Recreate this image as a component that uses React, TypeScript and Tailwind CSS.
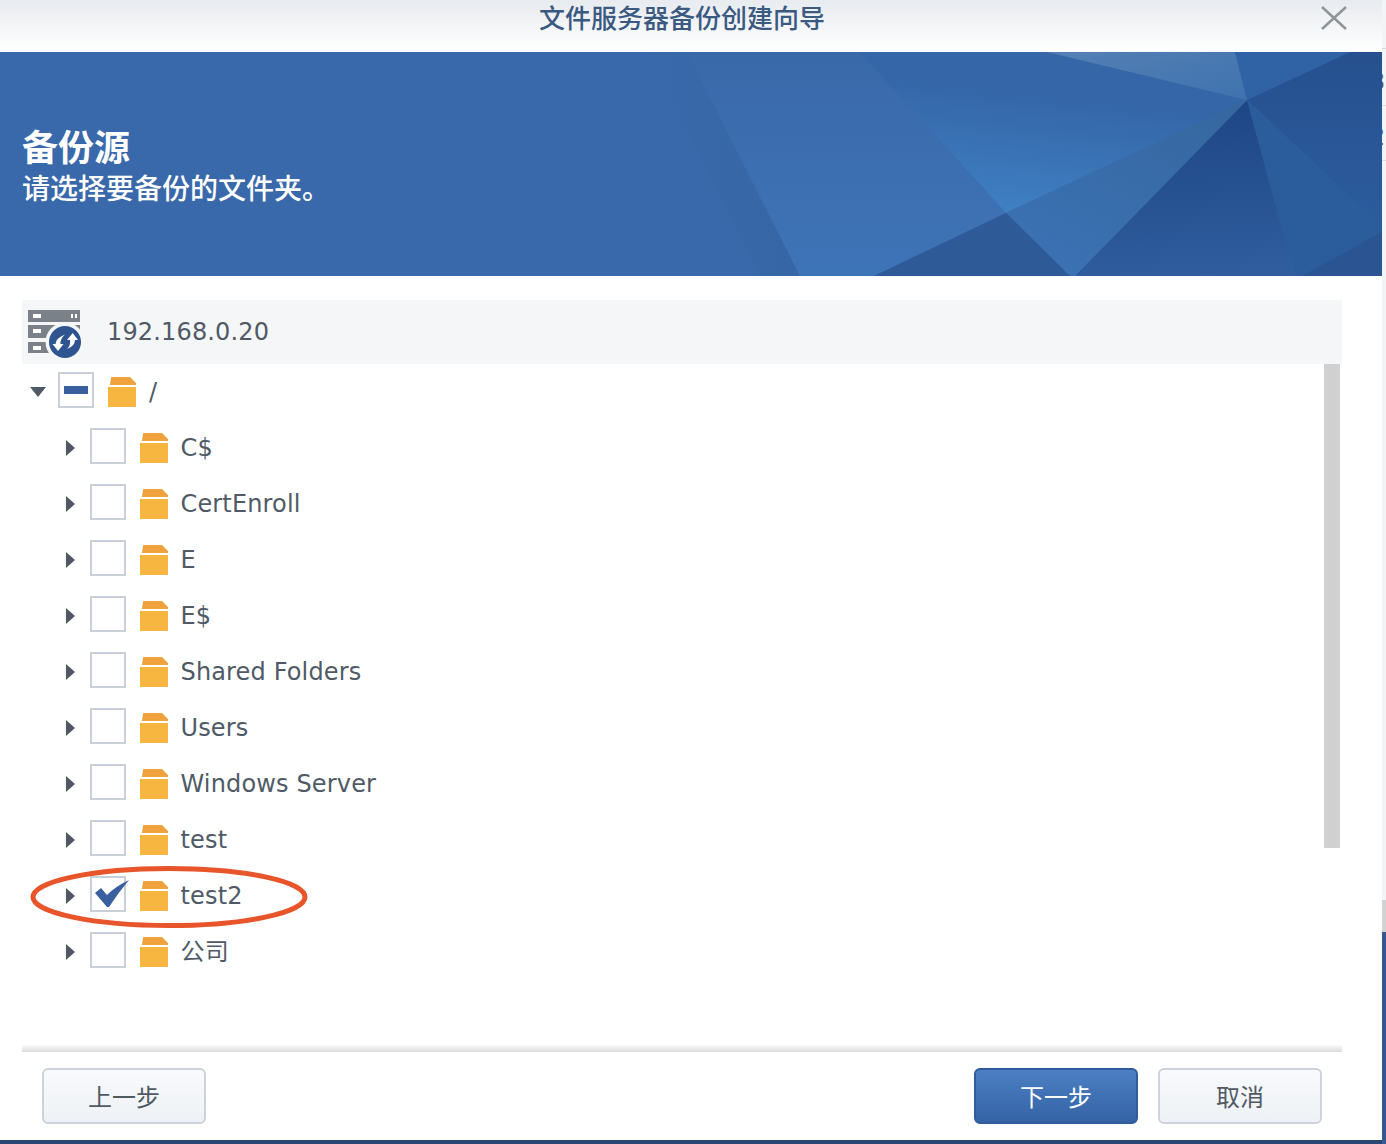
const CJK = '"Noto Sans CJK SC", sans-serif';

const rows = ["C$", "CertEnroll", "E", "E$", "Shared Folders", "Users", "Windows Server", "test", "test2", "公司"];

function Folder() {
  return (
    <svg width="28" height="30" viewBox="0 0 28 30" className="shrink-0">
      <path d="M3 1Q3 0 4 0H22L28 6V8H2Z" fill="#f0a23c" />
      <path d="M0 10H28V30H0Z" fill="#f6b63f" />
    </svg>
  );
}

function Arrow({ down }: { down?: boolean }) {
  if (down) {
    return (
      <svg width="16" height="10" viewBox="0 0 16 10" className="shrink-0">
        <path d="M0 0H16L8 10Z" fill="#4f5a66" />
      </svg>
    );
  }
  return (
    <svg width="9" height="16" viewBox="0 0 9 16" className="shrink-0">
      <path d="M0 0L9 8L0 16Z" fill="#4f5a66" />
    </svg>
  );
}

function ServerIcon() {
  return (
    <svg width="60" height="60" viewBox="0 0 60 60" className="shrink-0">
      <rect x="2" y="8" width="52" height="12" fill="#7b8188" />
      <rect x="7" y="12" width="8" height="4" fill="#fff" />
      <rect x="45" y="12" width="2" height="4" fill="#fff" />
      <rect x="49" y="12" width="2" height="4" fill="#fff" />
      <rect x="2" y="23" width="52" height="13" fill="#7b8188" />
      <rect x="7" y="27" width="8" height="4" fill="#fff" />
      <rect x="2" y="40" width="52" height="11" fill="#7b8188" />
      <rect x="7" y="44" width="8" height="4" fill="#fff" />
      <circle cx="39" cy="40" r="19.5" fill="#f5f6f8" />
      <circle cx="39" cy="40" r="16" fill="#2f5590" />
      <g transform="translate(0 5)">
        <path d="M46.7 26L52 33H49Q49 39 41 42Q45 38 44 33H41Z" fill="#fff" />
        <path d="M32 44L26.5 37H29.5Q30 31 39 27.5Q34 32 34.5 37H37.5Z" fill="#fff" />
      </g>
    </svg>
  );
}

function Banner() {
  return (
    <svg className="absolute inset-0" width="1382" height="224" viewBox="0 0 1382 224">
      <defs>
        <linearGradient id="mid" gradientUnits="userSpaceOnUse" x1="1020" y1="40" x2="1006" y2="161">
          <stop offset="0" stopColor="#3466a8" />
          <stop offset="1" stopColor="#3f80c3" />
        </linearGradient>
        <linearGradient id="left" x1="0" y1="0" x2="0" y2="1">
          <stop offset="0" stopColor="#3a69a9" />
          <stop offset="1" stopColor="#3e74b8" />
        </linearGradient>
        <linearGradient id="dark" x1="0.4" y1="0" x2="0.5" y2="1">
          <stop offset="0" stopColor="#1d4585" />
          <stop offset="1" stopColor="#2f5d9d" />
        </linearGradient>
        <linearGradient id="light" x1="0" y1="0" x2="1" y2="1">
          <stop offset="0" stopColor="#5480b4" />
          <stop offset="1" stopColor="#3f72ae" />
        </linearGradient>
        <linearGradient id="wedge" x1="0.9" y1="0" x2="0.2" y2="1">
          <stop offset="0" stopColor="#36679f" />
          <stop offset="1" stopColor="#3b72b4" />
        </linearGradient>
        <linearGradient id="fade" x1="0" y1="0" x2="1" y2="0">
          <stop offset="0" stopColor="#3a69ab" />
          <stop offset="1" stopColor="#3766a6" />
        </linearGradient>
        <linearGradient id="corner" x1="0" y1="0" x2="0" y2="1">
          <stop offset="0" stopColor="#26508e" />
          <stop offset="1" stopColor="#2c5c9e" />
        </linearGradient>
      </defs>
      <rect width="1382" height="224" fill="#3a69ab" />
      <path d="M645 0H687L800 224H760Z" fill="url(#fade)" />
      <path d="M687 0H860L1006 161L874 224H800Z" fill="url(#left)" />
      <path d="M860 0H1047L1247 48L1006 161Z" fill="url(#mid)" />
      <path d="M1047 0H1235L1247 48Z" fill="url(#light)" />
      <path d="M1235 0H1350L1247 48Z" fill="#2f63a6" />
      <path d="M1350 0H1382V175L1247 48Z" fill="url(#corner)" />
      <path d="M1247 48L1382 175V224H1295Z" fill="#2b5c9c" />
      <path d="M1382 180V224H1302Z" fill="#2a5592" />
      <path d="M1247 48L1295 224H1075Z" fill="url(#dark)" />
      <path d="M1247 48L1075 224H1070L1006 161Z" fill="url(#wedge)" />
      <path d="M1006 161L1070 224H874Z" fill="#2e5a98" />
    </svg>
  );
}

function TreeRow({ name }: { name: string }) {
  return (
    <div className="flex h-14 items-center pl-[44px]">
      <Arrow />
      <div className="ml-[15px] mb-1 h-9 w-9 shrink-0 border-2 border-[#c9cfd9] bg-white" />
      <div className="ml-[14px]">
        <Folder />
      </div>
      <span className="ml-[12.5px] tracking-[0.15px] text-[#4f5a66]">{name}</span>
    </div>
  );
}

export default function App() {
  return (
    <div
      className="relative h-[1144px] w-[1386px] overflow-hidden bg-white text-[24px]"
      style={{ fontFamily: '"DejaVu Sans", "Noto Sans CJK SC", sans-serif' }}
    >
      {/* sliver of the window behind the dialog */}
      <div className="absolute right-0 top-0 h-[932px] w-1 overflow-hidden bg-[#f3f4f5] text-[#555]">
        <span className="absolute left-[-12px] top-[64px]">3</span>
        <span className="absolute left-[-12px] top-[119px]">2</span>
        <div className="absolute top-[48px] h-px w-1 bg-[#dcdcdc]" />
        <div className="absolute top-[105px] h-px w-1 bg-[#dcdcdc]" />
        <div className="absolute top-[160px] h-px w-1 bg-[#dcdcdc]" />
        <div className="absolute bottom-0 h-8 w-1 bg-[#d2d2d2]" />
      </div>
      <div className="absolute bottom-0 right-0 h-[212px] w-1 bg-[#37588f]" />

      <div className="relative flex h-[1140px] w-[1382px] flex-col bg-white">
        {/* title bar */}
        <div className="relative flex h-[52px] shrink-0 justify-center bg-gradient-to-b from-[#e8ebef] to-white pr-[18px]">
          <span className="h-[34px] text-[26px] font-medium leading-[34px] text-[#3a5a82]" style={{ fontFamily: CJK }}>
            文件服务器备份创建向导
          </span>
          <svg width="26" height="24" viewBox="0 0 26 24" className="absolute left-[1321px] top-[6px]">
            <path d="M1 1L25 23M25 1L1 23" stroke="#8f9499" strokeWidth="2.5" fill="none" />
          </svg>
        </div>

        {/* banner */}
        <div className="relative h-[224px] shrink-0 overflow-hidden">
          <Banner />
          <div className="relative flex h-full flex-col justify-center pb-[2px] pl-[22px] text-white" style={{ fontFamily: CJK }}>
            <div className="text-[36px] font-bold leading-[48px]">备份源</div>
            <div className="text-[28px] font-medium leading-[36px]">请选择要备份的文件夹。</div>
          </div>
        </div>

        {/* tree */}
        <div className="ml-[22px] mr-[40px] mt-[24px] shrink-0">
          <div className="flex h-16 items-center bg-[#f5f6f8] pl-[4px]">
            <ServerIcon />
            <span className="ml-[21px] tracking-[0.15px] text-[#4f5a66]">192.168.0.20</span>
          </div>
          <div className="relative h-[681px]">
            <div className="absolute right-[2px] top-0 h-[484px] w-4 bg-[#d0d0d0]" />
            <div className="flex h-14 items-center pl-2">
              <Arrow down />
              <div className="ml-3 mb-1 flex h-9 w-9 shrink-0 items-center justify-center border-2 border-[#c9cfd9] bg-white">
                <div className="h-2 w-6 bg-[#3a5f9e]" />
              </div>
              <div className="ml-[14px]">
                <Folder />
              </div>
              <span className="ml-[13px] text-[#4f5a66]">/</span>
            </div>
            {rows.map((name) => (
              <TreeRow key={name} name={name} />
            ))}
          </div>
        </div>

        {/* footer */}
        <div className="ml-[22px] mr-[40px] h-[7px] shrink-0 bg-gradient-to-b from-[#fafafa] to-[#dcdcde]" />
        <div className="flex h-[88px] shrink-0 items-start justify-between pl-[42px] pr-[60px] pt-[16px]" style={{ fontFamily: CJK }}>
          <button className="h-14 w-[164px] rounded-md border-2 border-[#ccd3dc] bg-gradient-to-b from-[#f8fafd] to-[#eef1f5] text-[#505a64]">
            上一步
          </button>
          <div className="flex gap-5">
            <button className="h-14 w-[164px] rounded-md border-2 border-[#2f5c9c] bg-gradient-to-b from-[#4c7fc4] to-[#3563a6] text-white">
              下一步
            </button>
            <button className="h-14 w-[164px] rounded-md border-2 border-[#ccd3dc] bg-gradient-to-b from-[#f8fafd] to-[#eef1f5] text-[#505a64]">
              取消
            </button>
          </div>
        </div>
      </div>
      <div className="h-1 bg-[#2b4672]" />

      {/* hand-drawn annotation over the page */}
      <svg className="pointer-events-none absolute left-0 top-0" width="340" height="940" viewBox="0 0 340 940">
        <path d="M95 893L101 888L107 895Q116 886 129 880Q118 893 109 907H107Z" fill="#3a5f9e" />
        <ellipse cx="169" cy="897" rx="136" ry="28.5" fill="none" stroke="#e8552a" strokeWidth="5" />
      </svg>
    </div>
  );
}
